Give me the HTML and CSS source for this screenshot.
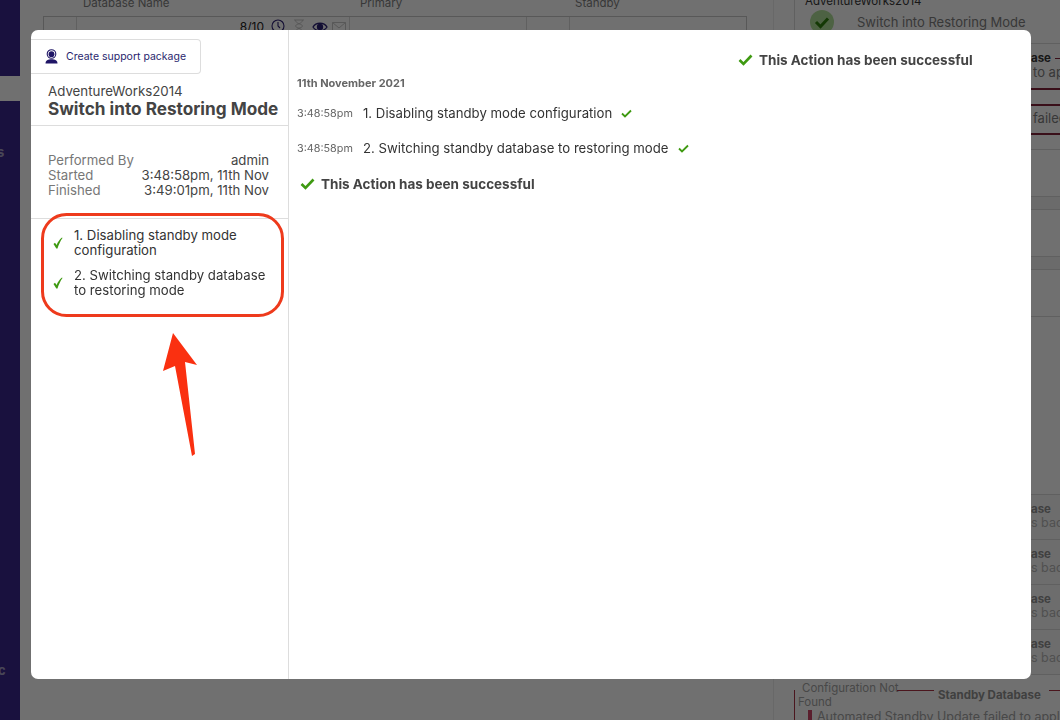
FILE: index.html
```html
<!DOCTYPE html>
<html lang="en">
<head>
    <meta charset="UTF-8">
    <title>Switch into Restoring Mode</title>
    <link rel="stylesheet" href="styles.css">
</head>
<body>
    <!-- page behind the dialog -->
    <div class="page">
        <div class="sidebar">
            <div class="side-top"></div>
            <div class="side-active"></div>
            <div class="side-rest">
                <span class="side-s">s</span>
                <span class="side-c">c</span>
            </div>
        </div>
        <div class="main">
            <div class="table-head">
                <span class="th-name">Database Name</span>
                <span class="th-primary">Primary</span>
                <span class="th-standby">Standby</span>
            </div>
            <div class="table-row">
                <div class="cell cell-a"></div>
                <div class="cell cell-b">
                    <span>8/10</span>
                    <svg width="14" height="14" viewBox="0 0 14 14"><circle cx="7" cy="7" r="6" fill="none" stroke="#2a1f6e" stroke-width="1.100"/><path d="M7 3v4l2 2" fill="none" stroke="#2a1f6e" stroke-width="1.100"/></svg>
                    <svg class="icon-hourglass" width="12" height="14" viewBox="0 0 12 14"><path d="M1 1h10M1 13h10M2.500 1c0 4 7 4 7 6s-7 2-7 6M9.500 1c0 4-7 4-7 6s7 2 7 6" fill="none" stroke="#bbb" stroke-width="1"/></svg>
                    <svg class="icon-eye" width="16" height="12" viewBox="0 0 16 12"><path d="M1 6c3-5 11-5 14 0c-3 5-11 5-14 0z" fill="none" stroke="#2a1f6e" stroke-width="1.300"/><circle cx="8" cy="6" r="3.200" fill="#2a1f6e"/></svg>
                    <svg class="icon-mail" width="14" height="11" viewBox="0 0 14 11"><path d="M.5.500h13v10H.500zM.5.500L7 6l6.500-5.500" fill="none" stroke="#bbb" stroke-width="1"/></svg>
                </div>
                <div class="cell cell-c"></div>
                <div class="cell cell-d"></div>
                <div class="cell cell-e"></div>
            </div>
        </div>
        <div class="aside">
            <div class="aside-title">AdventureWorks2014</div>
            <div class="aside-action">
                <span class="ok-circle">
                    <svg width="24" height="24" viewBox="0 0 24 24"><path d="M6 12l4.500 4.500L18 8.500" fill="none" stroke="#2c7a0c" stroke-width="3"/></svg>
                </span>
                <span>Switch into Restoring Mode</span>
            </div>
            <div class="alert alert-first">
                <b class="alert-title">ase <i class="alert-dash"></i></b>
                <span>to ap</span>
            </div>
            <div class="alert alert-second"><span>failed</span></div>
            <div class="band band-plain"></div>
            <div class="band band-tall"></div>
            <div class="band band-thin"></div>
            <div class="band band-tall"></div>
            <div class="band band-thin"></div>
            <div class="band band-tall"></div>
            <div class="band band-last"></div>
            <div class="alert-small"><b>ase</b><span>s bac</span></div>
            <div class="alert-small"><b>ase</b><span>s bac</span></div>
            <div class="alert-small"><b>ase</b><span>s bac</span></div>
            <div class="alert-small"><b>ase</b><span>s bac</span></div>
            <div class="config">
                <div class="config-head">
                    <span class="config-legend">Configuration Not Found</span>
                    <b>Standby Database</b>
                    <i class="legend-line legend-line-a"></i>
                    <i class="legend-line legend-line-b"></i>
                </div>
                <div class="config-text"><i class="config-bang"></i>Automated Standby Update failed to apply</div>
            </div>
        </div>
    </div>

    <div class="overlay"></div>

    <div class="modal">
        <div class="modal-left">
            <button class="support-btn">
                <svg width="13" height="15" viewBox="0 0 13 15"><circle cx="6.500" cy="5.200" r="2.900" fill="#1f1566"/><circle cx="6.500" cy="5" r="4.300" fill="none" stroke="#1f1566" stroke-width="1.100"/><path d="M.5 14.500c0-3 2.500-4.300 6-4.300s6 1.300 6 4.300z" fill="#1f1566"/></svg>
                Create support package
            </button>
            <div class="job-head">
                <div class="job-db">AdventureWorks2014</div>
                <div class="job-name">Switch into Restoring Mode</div>
            </div>
            <div class="job-info">
                <div class="info-row"><span>Performed By</span><span class="info-val">admin</span></div>
                <div class="info-row"><span>Started</span><span class="info-val">3:48:58pm, 11th Nov</span></div>
                <div class="info-row"><span>Finished</span><span class="info-val">3:49:01pm, 11th Nov</span></div>
            </div>
            <div class="steps">
                <div class="step">
                    <svg class="step-tick" width="10" height="12" viewBox="0 0 10 12"><path d="M.5 7L2 5.800L3.600 8C4.800 5 6.500 2.500 9 .5L9.500 1C7.300 4 5.800 7.500 4.500 11.500H3.300z" fill="#3f9a12"/></svg>
                    <span>1. Disabling standby mode configuration</span>
                </div>
                <div class="step">
                    <svg class="step-tick" width="10" height="12" viewBox="0 0 10 12"><path d="M.5 7L2 5.800L3.600 8C4.800 5 6.500 2.500 9 .5L9.500 1C7.300 4 5.800 7.500 4.500 11.500H3.300z" fill="#3f9a12"/></svg>
                    <span>2. Switching standby database to restoring mode</span>
                </div>
            </div>
        </div>
        <div class="modal-right">
            <div class="result result-top">
                <svg class="result-icon" width="15" height="12" viewBox="0 0 15 12"><path d="M1.500 6l4 4L13.500 1.500" fill="none" stroke="#3f9a12" stroke-width="2.600"/></svg>
                <span>This Action has been successful</span>
            </div>
            <div class="log-date">11th November 2021</div>
            <div class="log-row">
                <span class="log-time">3:48:58pm</span>
                <span class="log-text">1. Disabling standby mode configuration</span>
                <svg width="11" height="9" viewBox="0 0 11 9"><path d="M1 4.500l3 3L10 1.500" fill="none" stroke="#3f9a12" stroke-width="1.800"/></svg>
            </div>
            <div class="log-row">
                <span class="log-time">3:48:58pm</span>
                <span class="log-text">2. Switching standby database to restoring mode</span>
                <svg width="11" height="9" viewBox="0 0 11 9"><path d="M1 4.500l3 3L10 1.500" fill="none" stroke="#3f9a12" stroke-width="1.800"/></svg>
            </div>
            <div class="result result-bottom">
                <svg class="result-icon" width="15" height="12" viewBox="0 0 15 12"><path d="M1.500 6l4 4L13.500 1.500" fill="none" stroke="#3f9a12" stroke-width="2.600"/></svg>
                <span>This Action has been successful</span>
            </div>
        </div>
    </div>

    <!-- red annotation drawn over the screenshot -->
    <svg class="annotation" width="1060" height="720" viewBox="0 0 1060 720">
        <rect x="42.500" y="214.500" width="240" height="101" rx="24" fill="none" stroke="#ee3a1c" stroke-width="3"/>
        <path d="M173 333L197 365L185 362L195 454L192 456L175 366L163 371z" fill="#fa3010"/>
    </svg>
</body>
</html>
```

FILE: styles.css
```css
body {
    margin: 0;
    width: 1060px;
    height: 720px;
    overflow: hidden;
    font-family: Inter, "Liberation Sans", sans-serif;
    color: #333;
    background-color: #eee;
}
.page {
    display: flex;
    height: 720px;
}
.sidebar {
    width: 20px;
    display: flex;
    flex-direction: column;
    flex-shrink: 0;
}
.side-top {
    height: 76px;
    background: #362585;
}
.side-active {
    height: 25px;
}
.side-rest {
    flex: 1;
    background: #362585;
    position: relative;
    color: #9a96b8;
    font-size: 13px;
    font-weight: bold;
}
.side-s {
    position: absolute;
    top: 43px;
    left: -3px;
}
.side-c {
    position: absolute;
    top: 561px;
    left: -2px;
}
.main {
    width: 753px;
    flex-shrink: 0;
    border-right: 1px solid #ddd;
}
.table-head {
    display: flex;
    height: 16px;
    font-size: 11.500px;
    color: #777;
    line-height: 6px;
}
.th-name {
    margin-left: 63px;
    width: 277px;
}
.th-primary {
    width: 215px;
}
.table-row {
    display: flex;
    height: 40px;
    border: 1px solid #bbb;
    margin-left: 23px;
    width: 704px;
    box-sizing: border-box;
}
.cell {
    border-right: 1px solid #ccc;
    font-size: 12px;
    box-sizing: border-box;
}
.cell-a {
    width: 33px;
}
.cell-b {
    width: 273px;
    display: flex;
    justify-content: flex-end;
    align-items: flex-start;
    gap: 7px;
    padding: 2px 3px 0 0;
    color: #222;
}
.icon-hourglass {
    margin-left: 1px;
}
.icon-eye {
    margin-top: 2px;
}
.icon-mail {
    margin: 3px 0 0 -3px;
}
.cell-c {
    width: 177px;
}
.cell-d {
    width: 43px;
}
.cell-e {
    flex: 1;
    border-right: none;
}
.aside {
    flex: 1;
    margin-left: 20px;
    font-size: 13px;
    color: #777;
    overflow: hidden;
    white-space: nowrap;
    display: flex;
    flex-direction: column;
}
.aside-title {
    height: 6px;
    flex-shrink: 0;
    font-size: 11.500px;
    line-height: 2px;
    padding-left: 10px;
    border-left: 1px solid #ccc;
    color: #333;
}
.aside-action {
    display: flex;
    align-items: center;
    gap: 23px;
    padding-left: 15px;
    height: 38px;
    flex-shrink: 0;
    padding-bottom: 6px;
    box-sizing: border-box;
    border-left: 1px solid #ccc;
    border-bottom: 1px solid #ccc;
}
.ok-circle {
    width: 24px;
    height: 24px;
    border-radius: 50%;
    background: #a5d08e;
    display: flex;
}
.alert {
    flex-shrink: 0;
    display: flex;
    flex-direction: column;
    padding-left: 237px;
    border-bottom: 2px solid #7a2035;
    box-sizing: border-box;
}
.alert span {
    margin-left: 2px;
}
.alert-first {
    height: 46px;
    padding-top: 7px;
    line-height: 14px;
}
.alert-title {
    font-size: 11.500px;
    color: #333;
}
.alert-dash {
    display: inline-block;
    width: 6px;
    height: 1px;
    background: #7a2035;
    vertical-align: middle;
    margin-left: 1px;
}
.alert-second {
    height: 31px;
    margin-top: 14px;
    border-top: 2px solid #7a2035;
    padding-top: 4px;
    line-height: 16px;
}
.band {
    flex-shrink: 0;
    box-sizing: border-box;
    border-bottom: 1px solid #ccc;
}
.band-plain {
    height: 15px;
}
.band-tall {
    height: 47px;
}
.band-thin {
    height: 13px;
    background: #e4e4e4;
}
.band-last {
    height: 178px;
}
.alert-small {
    flex-shrink: 0;
    height: 45px;
    box-sizing: border-box;
    padding: 7px 0 0 237px;
    border-bottom: 1px solid #ccc;
    display: flex;
    flex-direction: column;
    line-height: 14px;
    color: #aaa;
    background: #e8e8e8;
}
.alert-small b {
    font-size: 11.500px;
    color: #888;
}
.alert-small span {
    font-size: 12.500px;
}
.config {
    margin: 6px 0 0 0;
    padding-left: 4px;
    font-size: 11.500px;
    color: #999;
    position: relative;
}
.config::before {
    content: "";
    position: absolute;
    left: 0;
    top: 9px;
    bottom: 0;
    border-left: 1px solid #a03040;
}
.config-head {
    display: flex;
    height: 28px;
    gap: 32px;
}
.config-legend {
    width: 108px;
    white-space: normal;
    line-height: 14px;
    text-indent: 4px;
}
.legend-line {
    position: absolute;
    top: 9px;
    height: 1px;
    background: #a03040;
}
.legend-line-a {
    left: 103px;
    width: 37px;
}
.legend-line-b {
    left: 255px;
    width: 11px;
}
.config-head b {
    margin-top: 7px;
    color: #888;
}
.config-text {
    font-size: 12.500px;
    line-height: 15px;
    padding-left: 19px;
    position: relative;
}
.config-bang {
    position: absolute;
    left: 10px;
    top: 1px;
    width: 4px;
    height: 14px;
    background: #c04060;
}
.overlay {
    position: fixed;
    top: 0;
    left: 0;
    width: 100%;
    height: 100%;
    background: rgba(0, 0, 0, 0.53);
}
.modal {
    position: fixed;
    top: 30px;
    left: 31px;
    width: 1000px;
    height: 649px;
    background: white;
    border-radius: 7px;
    display: flex;
    overflow: hidden;
}
.modal-left {
    width: 257px;
    border-right: 1px solid #ddd;
    flex-shrink: 0;
}
.support-btn {
    display: flex;
    align-items: center;
    gap: 8px;
    width: 170px;
    height: 35px;
    margin-top: 9px;
    padding: 0 0 0 14px;
    background: white;
    border: 1px solid #ddd;
    border-left: none;
    border-radius: 0 4px 4px 0;
    font-family: inherit;
    font-size: 10.500px;
    color: #2a1f6e;
}
.job-head {
    padding: 9px 0 7px 17px;
    border-bottom: 1px solid #ddd;
}
.job-db {
    font-size: 13.300px;
    line-height: 16px;
    color: #444;
}
.job-name {
    font-size: 17.200px;
    font-weight: 700;
    line-height: 19px;
    color: #444;
    white-space: nowrap;
}
.job-info {
    padding: 27px 19px 20px 17px;
    border-bottom: 1px solid #ddd;
    font-size: 13.200px;
    line-height: 15px;
    color: #777;
}
.info-row {
    display: flex;
    justify-content: space-between;
}
.info-val {
    color: #444;
}
.steps {
    padding: 9px 14px 0 22px;
    font-size: 13.200px;
    line-height: 15px;
    color: #333;
}
.step {
    display: flex;
    align-items: center;
    gap: 11px;
    margin-bottom: 10px;
}
.step-tick {
    flex-shrink: 0;
}
.modal-right {
    flex: 1;
    padding: 0 8px;
}
.result {
    display: flex;
    align-items: center;
    gap: 6px;
    font-size: 13.500px;
    font-weight: 700;
    color: #444;
}
.result-top {
    margin: 22px 0 0 441px;
}
.result-bottom {
    margin: 19px 0 0 3px;
}
.log-date {
    margin-top: 8px;
    font-size: 11px;
    font-weight: 700;
    color: #666;
}
.log-row {
    display: flex;
    align-items: center;
    height: 18px;
    margin-top: 14px;
    margin-bottom: 5px;
}
.log-row + .log-row {
    margin-top: 17px;
}
.log-time {
    width: 66px;
    font-size: 10.800px;
    color: #666;
}
.log-text {
    font-size: 13.200px;
    color: #333;
    margin-right: 9px;
}
.annotation {
    position: fixed;
    top: 0;
    left: 0;
}
```
